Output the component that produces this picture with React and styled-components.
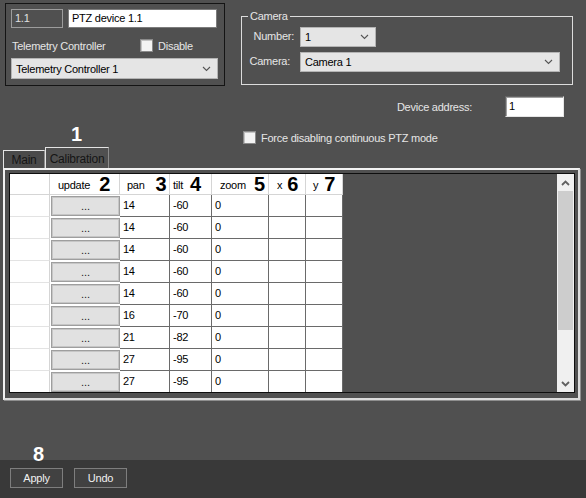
import React from 'react';
import styled, { createGlobalStyle } from 'styled-components';

const Global = createGlobalStyle`
  html, body { margin: 0; padding: 0; background: #505050; }
  body { font-family: "Liberation Sans", Arial, sans-serif; font-size: 11px; letter-spacing: -0.25px; }
  * { box-sizing: border-box; }
`;

const Page = styled.div`
  width: 586px;
  height: 498px;
  background: #505050;
  display: flex;
  flex-direction: column;
  overflow: hidden;
  color: #e6e6e6;
`;

const TopRow = styled.div`
  display: flex;
  height: 147px;
  padding: 3px 0 0 5px;
  flex: none;
`;

const LeftCol = styled.div`
  width: 220px;
  display: flex;
  flex-direction: column;
`;

const GroupBox = styled.div`
  height: 83px;
  border: 1px solid #141414;
  padding: 5px 5px 0 5px;
  display: flex;
  flex-direction: column;
`;

const FieldRow = styled.div`
  display: flex;
  gap: 5px;
  height: 19px;
`;

const IdField = styled.div`
  width: 52px;
  height: 19px;
  border: 1px solid #9c9c9c;
  background: #505050;
  color: #e0e0e0;
  padding-left: 3px;
  line-height: 17px;
`;

const NameField = styled.div`
  width: 149px;
  height: 19px;
  background: #fff;
  border: 1px solid #7c7c7c;
  color: #000;
  padding-left: 3px;
  line-height: 17px;
`;

const OptionRow = styled.div`
  display: flex;
  align-items: center;
  height: 13px;
  margin-top: ${p => p.$mt || 0}px;
  margin-left: ${p => p.$ml || 0}px;
`;

const Label = styled.span`
  color: #e6e6e6;
  white-space: nowrap;
  width: ${p => (p.$w ? `${p.$w}px` : 'auto')};
  padding-left: ${p => p.$pl || 0}px;
`;

const Check = styled.span`
  width: 13px;
  height: 13px;
  background: #f3f3f3;
  border: 1px solid #8a8a8a;
  box-shadow: inset 1px 1px 0 #c4c4c4;
  flex: none;
  margin-right: 5px;
`;

const Select = styled.div`
  width: ${p => p.$w}px;
  height: ${p => p.$h || 20}px;
  margin-top: ${p => p.$mt || 0}px;
  background: #e5e5e5;
  border: 1px solid #b4b4b4;
  color: #000;
  display: flex;
  align-items: center;
  justify-content: space-between;
  padding: 0 6px 0 4px;
  white-space: nowrap;
`;

const Annot = styled.div`
  font-family: "Liberation Sans", Arial, sans-serif;
  font-weight: bold;
  font-size: 20px;
  line-height: 20px;
  letter-spacing: 0;
  color: ${p => (p.$dark ? '#000' : '#fff')};
  margin-top: ${p => p.$mt || 0}px;
  margin-left: ${p => p.$ml || 0}px;
  margin-bottom: ${p => p.$mb || 0}px;
  position: relative;
  z-index: 1;
`;

const RightCol = styled.div`
  margin-left: 16px;
  width: 332px;
  display: flex;
  flex-direction: column;
`;

const Fieldset = styled.fieldset`
  margin: 6px 0 0 0;
  padding: 0;
  height: 76px;
  border: 1px solid #dcdcdc;
  min-width: 0;
`;

const Legend = styled.legend`
  margin-left: 6px;
  padding: 0 2px;
  line-height: 14px;
  color: #e6e6e6;
`;

const CamGrid = styled.div`
  display: grid;
  grid-template-columns: 52px auto;
  column-gap: 6px;
  row-gap: 5px;
  margin-top: 4px;
  align-items: center;
  justify-items: start;
`;

const CamLabel = styled.span`
  justify-self: end;
  padding-right: ${p => p.$pr || 0}px;
  margin-top: -2px;
  color: #e6e6e6;
`;

const DeviceRow = styled.div`
  display: flex;
  justify-content: flex-end;
  align-items: center;
  height: 21px;
  margin-top: 11px;
  padding-right: 9px;
  gap: 33px;
`;

const AddrInput = styled.div`
  width: 59px;
  height: 21px;
  background: #fff;
  color: #000;
  border: 1px solid;
  border-color: #646464 #e6e6e6 #e6e6e6 #646464;
  box-shadow: inset 1px 1px 0 #a0a0a0;
  padding-left: 3px;
  line-height: 19px;
`;

const TabStrip = styled.div`
  display: flex;
  align-items: flex-end;
  height: 21px;
  padding-left: 3px;
  flex: none;
`;

const Tab = styled.div`
  height: ${p => (p.$active ? 21 : 18)}px;
  width: ${p => p.$w}px;
  padding-top: ${p => (p.$active ? 2 : 0)}px;
  display: flex;
  align-items: center;
  justify-content: center;
  border: 1px solid;
  border-bottom: none;
  border-color: #e4e4e4 #8c8c8c transparent #e4e4e4;
  color: #151515;
  font-size: 12px;
  background: ${p => (p.$active ? '#505050' : '#4a4a4a')};
`;

const Panel = styled.div`
  margin-left: 3px;
  width: 577px;
  height: 232px;
  flex: none;
  border: 2px solid;
  border-color: #f2f2f2 #dcdcdc #dcdcdc #f2f2f2;
  box-shadow: 1px 1px 0 #8e8e8e;
  padding: 3px 3px 0 4px;
`;

const GridBox = styled.div`
  height: 220px;
  border: 1px solid #0e0e0e;
  display: flex;
`;

const TableArea = styled.div`
  flex: 1;
  overflow: hidden;
  background: #505050;
`;

const Table = styled.div`
  display: grid;
  width: 333px;
  grid-template-columns: 40px 70px 50px 42px 57px 37px 37px;
  grid-template-rows: 21px;
  grid-auto-rows: 22px;
`;

const HeadCell = styled.div`
  background: #fff;
  border-right: 1px solid #d5d5d5;
  border-bottom: 1px solid #d5d5d5;
  display: flex;
  align-items: center;
  padding-left: ${p => p.$pl || 0}px;
  gap: ${p => p.$gap || 7}px;
  color: #000;
`;

const HeadText = styled.span`
  margin-top: 2px;
`;

const RowHead = styled.div`
  background: #fff;
  border-bottom: 1px solid #e3e3e3;
  border-right: 1px solid #d5d5d5;
`;

const Cell = styled.div`
  background: #fff;
  border-right: 1px solid #6a6a6a;
  border-bottom: 1px solid #6a6a6a;
  padding-left: 3px;
  line-height: 21px;
  color: #000;
`;

const BtnCell = styled.div`
  background: #fff;
  padding: 1px 0 1px 1px;
`;

const CellButton = styled.div`
  height: 100%;
  background: #e1e1e1;
  border: 1px solid #9e9e9e;
  box-shadow: inset 0 0 0 1px #c6c6c6;
  display: flex;
  align-items: center;
  justify-content: center;
  color: #222;
  letter-spacing: 0;
`;

const ScrollBar = styled.div`
  width: 17px;
  flex: none;
  background: #f0f0f0;
  display: flex;
  flex-direction: column;
`;

const ScrollBtn = styled.div`
  height: 17px;
  flex: none;
  display: flex;
  align-items: center;
  justify-content: center;
`;

const Thumb = styled.div`
  height: 139px;
  flex: none;
  background: #cdcdcd;
  margin: 0 1px;
`;

const Track = styled.div`
  flex: 1;
`;

const Spacer = styled.div`
  flex: 1;
  display: flex;
  align-items: flex-end;
`;

const BottomBar = styled.div`
  height: 38px;
  flex: none;
  background: #393939;
  display: flex;
  align-items: flex-start;
  gap: 11px;
  padding: 8px 10px;
`;

const BarButton = styled.div`
  width: 53px;
  height: 20px;
  background: #414141;
  border: 1px solid #7e7e7e;
  color: #f0f0f0;
  display: flex;
  align-items: center;
  justify-content: center;
`;

const Chevron = ({ color = '#555' }) => (
  <svg width="9" height="6" viewBox="0 0 9 6">
    <path d="M1 1 L4.5 4.5 L8 1" stroke={color} strokeWidth="1.1" fill="none" />
  </svg>
);

const ScrollArrow = ({ up }) => (
  <svg width="9" height="6" viewBox="0 0 9 6">
    <path d={up ? 'M1 5 L4.5 1.5 L8 5' : 'M1 1 L4.5 4.5 L8 1'} stroke="#606060" strokeWidth="1.8" fill="none" />
  </svg>
);

const rows = [
  [14, -60, 0], [14, -60, 0], [14, -60, 0], [14, -60, 0], [14, -60, 0],
  [16, -70, 0], [21, -82, 0], [27, -95, 0], [27, -95, 0],
];

const headers = [
  { t: 'update', n: '2', pl: 8, gap: 9 },
  { t: 'pan', n: '3', pl: 7, gap: 11 },
  { t: 'tilt', n: '4', pl: 3, gap: 7 },
  { t: 'zoom', n: '5', pl: 8, gap: 8 },
  { t: 'x', n: '6', pl: 8, gap: 5 },
  { t: 'y', n: '7', pl: 7, gap: 6 },
];

export default function App() {
  return (
    <Page>
      <Global />
      <TopRow>
        <LeftCol>
          <GroupBox>
            <FieldRow>
              <IdField>1.1</IdField>
              <NameField>PTZ device 1.1</NameField>
            </FieldRow>
            <OptionRow $mt={11}>
              <Label $w={129} $pl={1}>Telemetry Controller</Label>
              <Check />
              <Label>Disable</Label>
            </OptionRow>
            <Select $w={207} $h={21} $mt={6}>
              <span>Telemetry Controller 1</span>
              <Chevron />
            </Select>
          </GroupBox>
          <Annot $mt={38} $ml={66}>1</Annot>
        </LeftCol>
        <RightCol>
          <Fieldset>
            <Legend>Camera</Legend>
            <CamGrid>
              <CamLabel>Number:</CamLabel>
              <Select $w={76}>
                <span>1</span>
                <Chevron />
              </Select>
              <CamLabel $pr={4}>Camera:</CamLabel>
              <Select $w={260}>
                <span>Camera 1</span>
                <Chevron />
              </Select>
            </CamGrid>
          </Fieldset>
          <DeviceRow>
            <Label>Device address:</Label>
            <AddrInput>1</AddrInput>
          </DeviceRow>
          <OptionRow $mt={14} $ml={2}>
            <Check />
            <Label>Force disabling continuous PTZ mode</Label>
          </OptionRow>
        </RightCol>
      </TopRow>
      <TabStrip>
        <Tab $w={42}>Main</Tab>
        <Tab $w={64} $active>Calibration</Tab>
      </TabStrip>
      <Panel>
        <GridBox>
          <TableArea>
            <Table>
              <HeadCell />
              {headers.map(h => (
                <HeadCell key={h.t} $pl={h.pl} $gap={h.gap}>
                  <HeadText>{h.t}</HeadText>
                  <Annot $dark>{h.n}</Annot>
                </HeadCell>
              ))}
              {rows.map((r, i) => (
                <React.Fragment key={i}>
                  <RowHead />
                  <BtnCell>
                    <CellButton>...</CellButton>
                  </BtnCell>
                  <Cell>{r[0]}</Cell>
                  <Cell>{r[1]}</Cell>
                  <Cell>{r[2]}</Cell>
                  <Cell />
                  <Cell />
                </React.Fragment>
              ))}
            </Table>
          </TableArea>
          <ScrollBar>
            <ScrollBtn><ScrollArrow up /></ScrollBtn>
            <Thumb />
            <Track />
            <ScrollBtn><ScrollArrow /></ScrollBtn>
          </ScrollBar>
        </GridBox>
      </Panel>
      <Spacer>
        <Annot $ml={33} $mb={-4}>8</Annot>
      </Spacer>
      <BottomBar>
        <BarButton>Apply</BarButton>
        <BarButton>Undo</BarButton>
      </BottomBar>
    </Page>
  );
}
